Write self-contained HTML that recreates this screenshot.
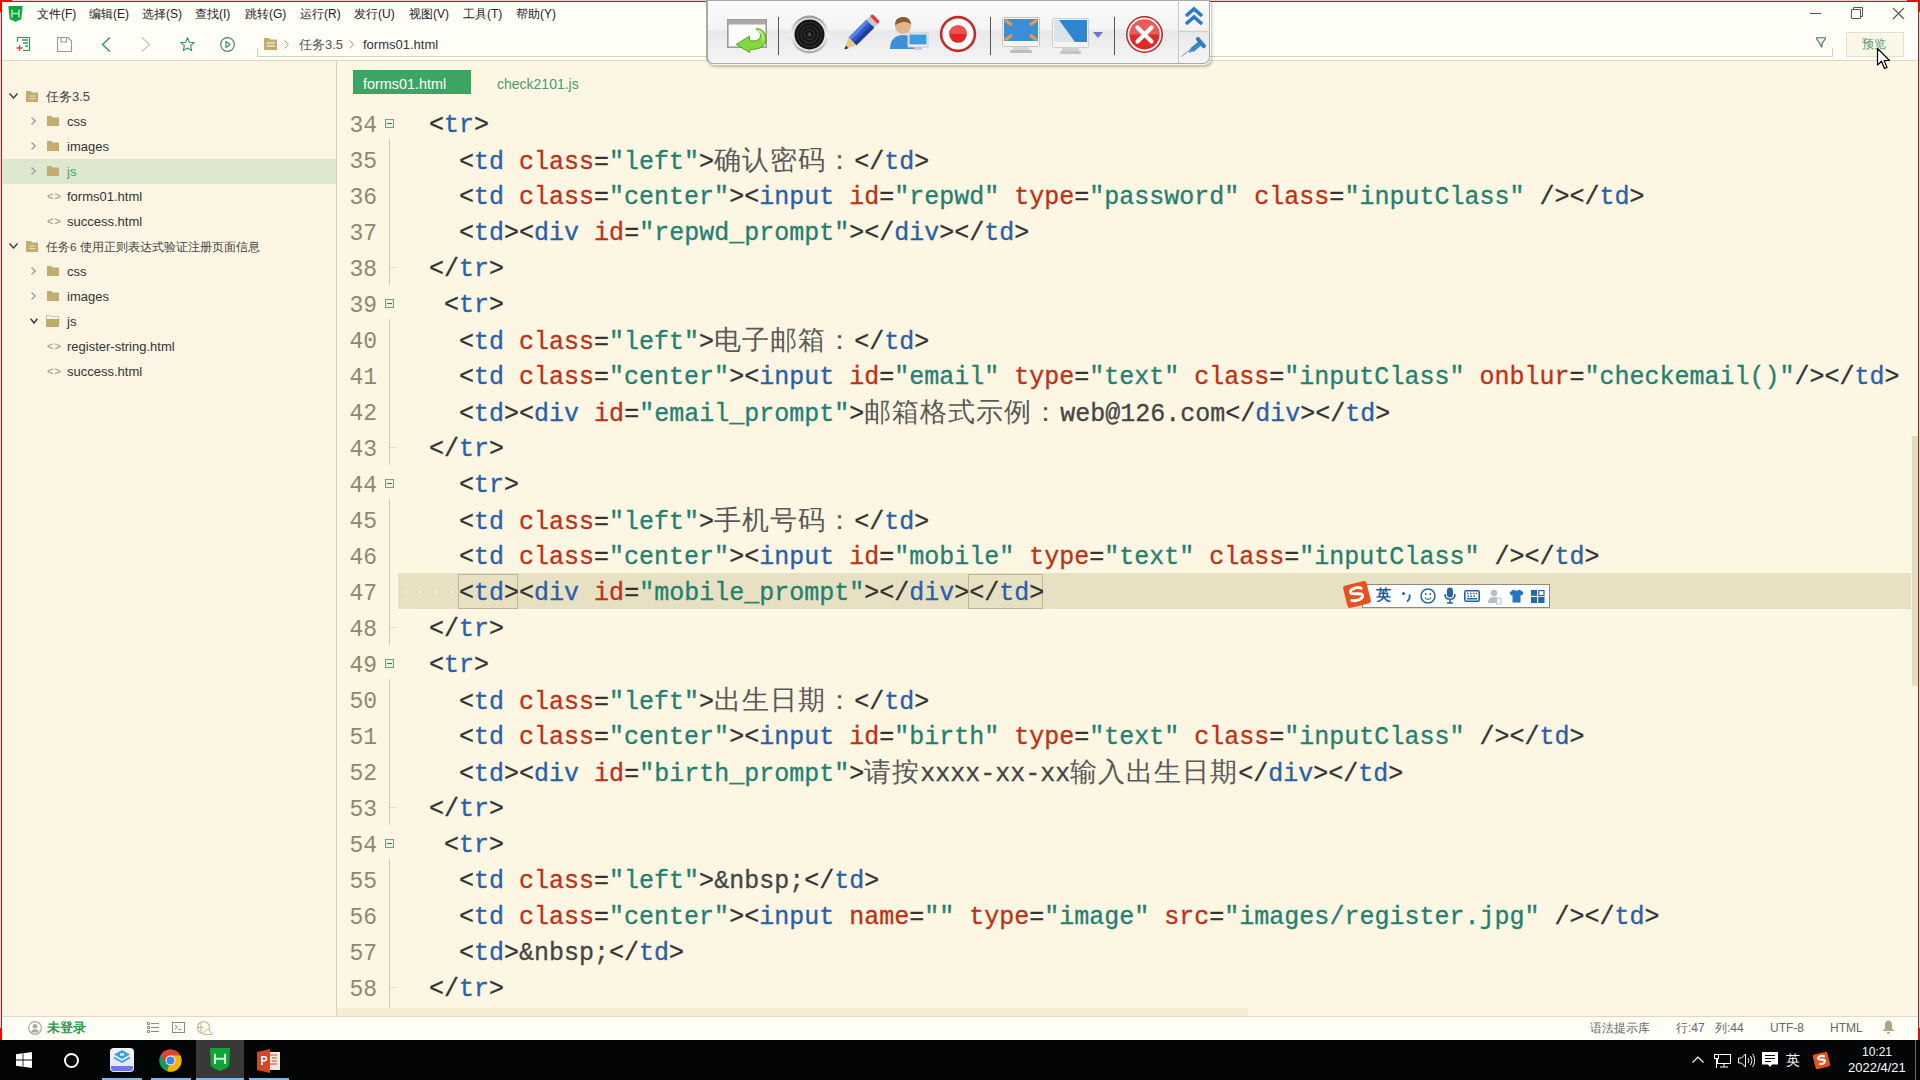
<!DOCTYPE html>
<html><head><meta charset="utf-8">
<style>
*{box-sizing:border-box;margin:0;padding:0}
html,body{width:1920px;height:1080px;overflow:hidden}
body{position:relative;background:#FDF6E3;font-family:"Liberation Sans",sans-serif;color:#333}
.abs{position:absolute}
svg{position:absolute;overflow:visible}
#topbar{left:0;top:0;width:1920px;height:61px;background:#FEFDF6;border-bottom:1px solid #DCD6C2}
.mi{position:absolute;top:6px;font-size:12px;line-height:17px;color:#222;white-space:nowrap}
#sidebar{left:0;top:61px;width:337px;height:955px;background:#FCF5E3;border-right:1px solid #D8D2BE}
.tr{position:absolute;font-size:13px;line-height:17px;color:#333;white-space:nowrap}
#editor{left:337px;top:61px;width:1581px;height:955px;background:#FDF6E3}
.ln{position:absolute;left:337px;width:40px;text-align:right;font-family:"Liberation Mono",monospace;font-size:23px;color:#8E8870;line-height:36px;height:36px}
.cj{display:inline-block;font-size:27px;letter-spacing:1px;color:#5A5A5A;overflow:visible;-webkit-text-stroke:0}
.cl{position:absolute;left:399px;font-family:"Liberation Mono",monospace;font-size:25px;line-height:36px;height:36px;white-space:pre;color:#333;-webkit-text-stroke:0.3px currentColor}
.t{color:#2A60A8}.a{color:#BF3015}.v{color:#23806F}.p{color:#333}.x{color:#444}
#status{left:0;top:1016px;width:1920px;height:24px;background:#FEFDF6;border-top:1px solid #DED8C4}
.st{position:absolute;top:5px;font-size:12px;line-height:14px;color:#666;white-space:nowrap}
#taskbar{left:0;top:1040px;width:1920px;height:40px;background:#040506}
</style></head><body>
<div id="topbar" class="abs"></div>
<div id="sidebar" class="abs"></div>
<div id="editor" class="abs"></div>
<div class="abs" style="left:398px;top:573px;width:1513px;height:36px;background:#E7E0C3"></div>
<div class="abs" style="left:458px;top:574px;width:60px;height:35px;border:1px solid #BDB59C"></div>
<div class="abs" style="left:968px;top:574px;width:75px;height:35px;border:1px solid #BDB59C"></div>
<div class="abs" style="left:405px;top:591px;width:2px;height:2px;background:#F7F2E2"></div>
<div class="abs" style="left:420px;top:591px;width:2px;height:2px;background:#F7F2E2"></div>
<div class="abs" style="left:435px;top:591px;width:2px;height:2px;background:#F7F2E2"></div>
<div class="abs" style="left:450px;top:591px;width:2px;height:2px;background:#F7F2E2"></div>
<div class="abs" style="left:385px;top:119px;width:9px;height:9px;border:1px solid #7E9A82;background:#E8F4E0"></div>
<div class="abs" style="left:387px;top:123px;width:5px;height:1px;background:#4F6F55"></div>
<div class="abs" style="left:389px;top:139px;width:1px;height:146px;background:#CFC8B2"></div>
<div class="abs" style="left:390px;top:267px;width:6px;height:1px;background:#E2DBC6"></div>
<div class="abs" style="left:385px;top:299px;width:9px;height:9px;border:1px solid #7E9A82;background:#E8F4E0"></div>
<div class="abs" style="left:387px;top:303px;width:5px;height:1px;background:#4F6F55"></div>
<div class="abs" style="left:389px;top:319px;width:1px;height:146px;background:#CFC8B2"></div>
<div class="abs" style="left:390px;top:447px;width:6px;height:1px;background:#E2DBC6"></div>
<div class="abs" style="left:385px;top:479px;width:9px;height:9px;border:1px solid #7E9A82;background:#E8F4E0"></div>
<div class="abs" style="left:387px;top:483px;width:5px;height:1px;background:#4F6F55"></div>
<div class="abs" style="left:389px;top:499px;width:1px;height:146px;background:#CFC8B2"></div>
<div class="abs" style="left:390px;top:627px;width:6px;height:1px;background:#E2DBC6"></div>
<div class="abs" style="left:385px;top:659px;width:9px;height:9px;border:1px solid #7E9A82;background:#E8F4E0"></div>
<div class="abs" style="left:387px;top:663px;width:5px;height:1px;background:#4F6F55"></div>
<div class="abs" style="left:389px;top:679px;width:1px;height:146px;background:#CFC8B2"></div>
<div class="abs" style="left:390px;top:807px;width:6px;height:1px;background:#E2DBC6"></div>
<div class="abs" style="left:385px;top:839px;width:9px;height:9px;border:1px solid #7E9A82;background:#E8F4E0"></div>
<div class="abs" style="left:387px;top:843px;width:5px;height:1px;background:#4F6F55"></div>
<div class="abs" style="left:389px;top:859px;width:1px;height:149px;background:#CFC8B2"></div>
<div class="abs" style="left:390px;top:987px;width:6px;height:1px;background:#E2DBC6"></div>
<div class="abs" style="left:1912px;top:436px;width:6px;height:250px;background:#E4DDC0"></div>
<div class="abs" style="left:337px;top:1008px;width:911px;height:8px;background:#F2EDD3"></div>
<div id="code"><div class="ln" style="top:108px">34</div>
<div class="cl" style="top:108px"><span class="x">  </span><span class="p">&lt;</span><span class="t">tr</span><span class="p">&gt;</span></div>
<div class="ln" style="top:144px">35</div>
<div class="cl" style="top:144px"><span class="x">    </span><span class="p">&lt;</span><span class="t">td</span> <span class="a">class</span><span class="p">=</span><span class="v">"left"</span><span class="p">&gt;</span><span class="cj" style="width:140px">确认密码：</span><span class="p">&lt;/</span><span class="t">td</span><span class="p">&gt;</span></div>
<div class="ln" style="top:180px">36</div>
<div class="cl" style="top:180px"><span class="x">    </span><span class="p">&lt;</span><span class="t">td</span> <span class="a">class</span><span class="p">=</span><span class="v">"center"</span><span class="p">&gt;</span><span class="p">&lt;</span><span class="t">input</span> <span class="a">id</span><span class="p">=</span><span class="v">"repwd"</span> <span class="a">type</span><span class="p">=</span><span class="v">"password"</span> <span class="a">class</span><span class="p">=</span><span class="v">"inputClass"</span> <span class="p">/&gt;</span><span class="p">&lt;/</span><span class="t">td</span><span class="p">&gt;</span></div>
<div class="ln" style="top:216px">37</div>
<div class="cl" style="top:216px"><span class="x">    </span><span class="p">&lt;</span><span class="t">td</span><span class="p">&gt;</span><span class="p">&lt;</span><span class="t">div</span> <span class="a">id</span><span class="p">=</span><span class="v">"repwd_prompt"</span><span class="p">&gt;</span><span class="p">&lt;/</span><span class="t">div</span><span class="p">&gt;</span><span class="p">&lt;/</span><span class="t">td</span><span class="p">&gt;</span></div>
<div class="ln" style="top:252px">38</div>
<div class="cl" style="top:252px"><span class="x">  </span><span class="p">&lt;/</span><span class="t">tr</span><span class="p">&gt;</span></div>
<div class="ln" style="top:288px">39</div>
<div class="cl" style="top:288px"><span class="x">   </span><span class="p">&lt;</span><span class="t">tr</span><span class="p">&gt;</span></div>
<div class="ln" style="top:324px">40</div>
<div class="cl" style="top:324px"><span class="x">    </span><span class="p">&lt;</span><span class="t">td</span> <span class="a">class</span><span class="p">=</span><span class="v">"left"</span><span class="p">&gt;</span><span class="cj" style="width:140px">电子邮箱：</span><span class="p">&lt;/</span><span class="t">td</span><span class="p">&gt;</span></div>
<div class="ln" style="top:360px">41</div>
<div class="cl" style="top:360px"><span class="x">    </span><span class="p">&lt;</span><span class="t">td</span> <span class="a">class</span><span class="p">=</span><span class="v">"center"</span><span class="p">&gt;</span><span class="p">&lt;</span><span class="t">input</span> <span class="a">id</span><span class="p">=</span><span class="v">"email"</span> <span class="a">type</span><span class="p">=</span><span class="v">"text"</span> <span class="a">class</span><span class="p">=</span><span class="v">"inputClass"</span> <span class="a">onblur</span><span class="p">=</span><span class="v">"checkemail()"</span><span class="p">/&gt;</span><span class="p">&lt;/</span><span class="t">td</span><span class="p">&gt;</span></div>
<div class="ln" style="top:396px">42</div>
<div class="cl" style="top:396px"><span class="x">    </span><span class="p">&lt;</span><span class="t">td</span><span class="p">&gt;</span><span class="p">&lt;</span><span class="t">div</span> <span class="a">id</span><span class="p">=</span><span class="v">"email_prompt"</span><span class="p">&gt;</span><span class="cj" style="width:196px">邮箱格式示例：</span><span class="x">web@126.com</span><span class="p">&lt;/</span><span class="t">div</span><span class="p">&gt;</span><span class="p">&lt;/</span><span class="t">td</span><span class="p">&gt;</span></div>
<div class="ln" style="top:432px">43</div>
<div class="cl" style="top:432px"><span class="x">  </span><span class="p">&lt;/</span><span class="t">tr</span><span class="p">&gt;</span></div>
<div class="ln" style="top:468px">44</div>
<div class="cl" style="top:468px"><span class="x">    </span><span class="p">&lt;</span><span class="t">tr</span><span class="p">&gt;</span></div>
<div class="ln" style="top:504px">45</div>
<div class="cl" style="top:504px"><span class="x">    </span><span class="p">&lt;</span><span class="t">td</span> <span class="a">class</span><span class="p">=</span><span class="v">"left"</span><span class="p">&gt;</span><span class="cj" style="width:140px">手机号码：</span><span class="p">&lt;/</span><span class="t">td</span><span class="p">&gt;</span></div>
<div class="ln" style="top:540px">46</div>
<div class="cl" style="top:540px"><span class="x">    </span><span class="p">&lt;</span><span class="t">td</span> <span class="a">class</span><span class="p">=</span><span class="v">"center"</span><span class="p">&gt;</span><span class="p">&lt;</span><span class="t">input</span> <span class="a">id</span><span class="p">=</span><span class="v">"mobile"</span> <span class="a">type</span><span class="p">=</span><span class="v">"text"</span> <span class="a">class</span><span class="p">=</span><span class="v">"inputClass"</span> <span class="p">/&gt;</span><span class="p">&lt;/</span><span class="t">td</span><span class="p">&gt;</span></div>
<div class="ln" style="top:576px">47</div>
<div class="cl" style="top:576px"><span class="x">    </span><span class="p">&lt;</span><span class="t">td</span><span class="p">&gt;</span><span class="p">&lt;</span><span class="t">div</span> <span class="a">id</span><span class="p">=</span><span class="v">"mobile_prompt"</span><span class="p">&gt;</span><span class="p">&lt;/</span><span class="t">div</span><span class="p">&gt;</span><span class="p">&lt;/</span><span class="t">td</span><span class="p">&gt;</span></div>
<div class="ln" style="top:612px">48</div>
<div class="cl" style="top:612px"><span class="x">  </span><span class="p">&lt;/</span><span class="t">tr</span><span class="p">&gt;</span></div>
<div class="ln" style="top:648px">49</div>
<div class="cl" style="top:648px"><span class="x">  </span><span class="p">&lt;</span><span class="t">tr</span><span class="p">&gt;</span></div>
<div class="ln" style="top:684px">50</div>
<div class="cl" style="top:684px"><span class="x">    </span><span class="p">&lt;</span><span class="t">td</span> <span class="a">class</span><span class="p">=</span><span class="v">"left"</span><span class="p">&gt;</span><span class="cj" style="width:140px">出生日期：</span><span class="p">&lt;/</span><span class="t">td</span><span class="p">&gt;</span></div>
<div class="ln" style="top:720px">51</div>
<div class="cl" style="top:720px"><span class="x">    </span><span class="p">&lt;</span><span class="t">td</span> <span class="a">class</span><span class="p">=</span><span class="v">"center"</span><span class="p">&gt;</span><span class="p">&lt;</span><span class="t">input</span> <span class="a">id</span><span class="p">=</span><span class="v">"birth"</span> <span class="a">type</span><span class="p">=</span><span class="v">"text"</span> <span class="a">class</span><span class="p">=</span><span class="v">"inputClass"</span> <span class="p">/&gt;</span><span class="p">&lt;/</span><span class="t">td</span><span class="p">&gt;</span></div>
<div class="ln" style="top:756px">52</div>
<div class="cl" style="top:756px"><span class="x">    </span><span class="p">&lt;</span><span class="t">td</span><span class="p">&gt;</span><span class="p">&lt;</span><span class="t">div</span> <span class="a">id</span><span class="p">=</span><span class="v">"birth_prompt"</span><span class="p">&gt;</span><span class="cj" style="width:56px">请按</span><span class="x">xxxx-xx-xx</span><span class="cj" style="width:168px">输入出生日期</span><span class="p">&lt;/</span><span class="t">div</span><span class="p">&gt;</span><span class="p">&lt;/</span><span class="t">td</span><span class="p">&gt;</span></div>
<div class="ln" style="top:792px">53</div>
<div class="cl" style="top:792px"><span class="x">  </span><span class="p">&lt;/</span><span class="t">tr</span><span class="p">&gt;</span></div>
<div class="ln" style="top:828px">54</div>
<div class="cl" style="top:828px"><span class="x">   </span><span class="p">&lt;</span><span class="t">tr</span><span class="p">&gt;</span></div>
<div class="ln" style="top:864px">55</div>
<div class="cl" style="top:864px"><span class="x">    </span><span class="p">&lt;</span><span class="t">td</span> <span class="a">class</span><span class="p">=</span><span class="v">"left"</span><span class="p">&gt;</span><span class="x">&amp;nbsp;</span><span class="p">&lt;/</span><span class="t">td</span><span class="p">&gt;</span></div>
<div class="ln" style="top:900px">56</div>
<div class="cl" style="top:900px"><span class="x">    </span><span class="p">&lt;</span><span class="t">td</span> <span class="a">class</span><span class="p">=</span><span class="v">"center"</span><span class="p">&gt;</span><span class="p">&lt;</span><span class="t">input</span> <span class="a">name</span><span class="p">=</span><span class="v">""</span> <span class="a">type</span><span class="p">=</span><span class="v">"image"</span> <span class="a">src</span><span class="p">=</span><span class="v">"images/register.jpg"</span> <span class="p">/&gt;</span><span class="p">&lt;/</span><span class="t">td</span><span class="p">&gt;</span></div>
<div class="ln" style="top:936px">57</div>
<div class="cl" style="top:936px"><span class="x">    </span><span class="p">&lt;</span><span class="t">td</span><span class="p">&gt;</span><span class="x">&amp;nbsp;</span><span class="p">&lt;/</span><span class="t">td</span><span class="p">&gt;</span></div>
<div class="ln" style="top:972px">58</div>
<div class="cl" style="top:972px"><span class="x">  </span><span class="p">&lt;/</span><span class="t">tr</span><span class="p">&gt;</span></div></div>
<!-- IME toolbar -->
<div class="abs" style="left:1362px;top:584px;width:188px;height:24px;background:#FDFEFF;border:1px solid #8F8A7A"></div>
<svg style="left:1342px;top:580px" width="30" height="29" viewBox="0 0 30 29"><g transform="rotate(-14 15 14.5)"><rect x="3" y="3" width="24" height="23" rx="3" fill="#E8501E"/><path d="M20.5 9.5C19 8 16 7.5 13 8C9.5 8.5 8.5 10.5 9.8 12C11 13.3 14 13.5 16.5 14C19.5 14.7 21 16 19.8 18C18.5 19.8 15 20.5 11.5 20C10 19.8 9 19.3 8.5 19" stroke="#fff" stroke-width="3" fill="none" stroke-linecap="round"/></g></svg>
<span class="abs" style="left:1376px;top:586px;font-size:15px;line-height:18px;font-weight:bold;color:#1E5E9E">英</span>
<div class="abs" style="left:1402px;top:592px;width:3px;height:3px;border-radius:50%;background:#2A5F8F"></div>
<svg style="left:1406px;top:594px" width="5" height="8" viewBox="0 0 5 8"><path d="M3.5 0.5C4 3 3 6 1 7.5" stroke="#2A5F8F" stroke-width="1.8" fill="none"/></svg>
<svg style="left:1420px;top:588px" width="16" height="16" viewBox="0 0 16 16"><circle cx="8" cy="8" r="7" stroke="#2466A8" stroke-width="1.5" fill="none"/><path d="M5.8 5V7M10.2 5V7" stroke="#2466A8" stroke-width="1.4"/><path d="M4.8 9.5C6.5 12 9.5 12 11.2 9.5" stroke="#2466A8" stroke-width="1.3" fill="none"/></svg>
<svg style="left:1444px;top:587px" width="12" height="17" viewBox="0 0 12 17"><rect x="3" y="0.5" width="6" height="10" rx="3" fill="#2466A8"/><path d="M1 7C1 10.5 3 12.3 6 12.3C9 12.3 11 10.5 11 7M6 12.3V15.5M3 16H9" stroke="#2466A8" stroke-width="1.6" fill="none"/></svg>
<svg style="left:1464px;top:590px" width="16" height="12" viewBox="0 0 16 12"><rect x="0.8" y="0.8" width="14.4" height="10.4" rx="1.5" fill="#fff" stroke="#1F62B0" stroke-width="1.6"/><path d="M3 3.5H4.5M6 3.5H7.5M9 3.5H10.5M12 3.5H13M3.5 6.2H5M6.5 6.2H8M9.5 6.2H11M3 8.8H13" stroke="#1F62B0" stroke-width="1.4"/></svg>
<svg style="left:1488px;top:589px" width="14" height="16" viewBox="0 0 14 16"><circle cx="6" cy="4" r="3.3" fill="#B7BCC2"/><path d="M0 14C0 10 2.5 8 6 8C9.5 8 12 10 12 14Z" fill="#B7BCC2"/><rect x="8.5" y="9" width="4.5" height="6" fill="#fff" stroke="#B7BCC2" stroke-width="1"/></svg>
<svg style="left:1509px;top:589px" width="15" height="14" viewBox="0 0 15 14"><path d="M4.5 0.5L0.5 3.5L2 6.5L3.5 6V13.5H11.5V6L13 6.5L14.5 3.5L10.5 0.5C9.5 2 5.5 2 4.5 0.5Z" fill="#2474C0"/></svg>
<svg style="left:1531px;top:590px" width="14" height="13" viewBox="0 0 14 13"><rect x="0" y="0" width="6" height="5.8" fill="#1F6AAE"/><rect x="7.8" y="0.6" width="5.2" height="5" fill="#fff" stroke="#1F6AAE" stroke-width="1.2"/><rect x="0" y="7" width="6" height="6" fill="#1F6AAE"/><rect x="7.2" y="7" width="6.3" height="6" fill="#1F6AAE"/></svg>

<div id="status" class="abs"></div>
<svg style="left:28px;top:1021px" width="14" height="14" viewBox="0 0 14 14"><circle cx="7" cy="7" r="6.4" stroke="#A9A9A6" stroke-width="1.2" fill="none"/><circle cx="7" cy="5.3" r="2.3" fill="#A9A9A6"/><path d="M3 11.5C3.5 9 5 8.2 7 8.2C9 8.2 10.5 9 11 11.5Z" fill="#A9A9A6"/></svg>
<span class="st" style="left:47px;top:1020px;font-size:13px;line-height:16px;font-weight:bold;color:#2E9A4E">未登录</span>
<svg style="left:147px;top:1022px" width="12" height="11" viewBox="0 0 12 11"><path d="M0.5 0.5H2.5V2.5H0.5ZM0.5 4.5H2.5V6.5H0.5ZM0.5 8.5H2.5V10.5H0.5Z" stroke="#8A8A80" fill="none" stroke-width="1"/><path d="M4 1.5H12M4 5.5H12M4 9.5H12" stroke="#8A8A80" stroke-width="1"/></svg>
<svg style="left:172px;top:1022px" width="13" height="11" viewBox="0 0 13 11"><rect x="0.5" y="0.5" width="12" height="10" stroke="#8A8A80" fill="none" stroke-width="1"/><path d="M3 3L5.5 5L3 7M6.5 7.5H9" stroke="#8A8A80" fill="none" stroke-width="1"/></svg>
<svg style="left:197px;top:1021px" width="16" height="14" viewBox="0 0 16 14"><circle cx="6.5" cy="6.5" r="6" stroke="#C6B789" stroke-width="1.1" fill="none"/><path d="M0.5 6.5H7M4 1V12" stroke="#C6B789" stroke-width="1"/><path d="M8 13.5C6.5 13.5 6 12.5 6.5 11.3C7 10.2 8 10 8.6 10.2C9 8.5 10.5 8 11.8 8.5C13 9 13.3 10.3 13 11C14.5 11.2 15.5 12 15.3 13.5Z" fill="#FEFDF6" stroke="#C6B789" stroke-width="1"/></svg>
<span class="st" style="left:1590px;top:1021px">语法提示库</span>
<span class="st" style="left:1676px;top:1021px">行:47</span>
<span class="st" style="left:1715px;top:1021px">列:44</span>
<span class="st" style="left:1770px;top:1021px">UTF-8</span>
<span class="st" style="left:1830px;top:1021px">HTML</span>
<svg style="left:1882px;top:1020px" width="13" height="14" viewBox="0 0 13 14"><path d="M6.5 0.5C4 0.5 3 2.5 3 5V8.5L0.5 11H12.5L10 8.5V5C10 2.5 9 0.5 6.5 0.5Z" fill="#A9A98A"/><rect x="5" y="12" width="3" height="1.6" fill="#A9A98A"/></svg>

<div id="taskbar" class="abs"></div>
<!-- start -->
<svg style="left:16px;top:1052px" width="16" height="16" viewBox="0 0 16 16"><path d="M0 2.2L6.6 1.3V7.6H0ZM7.4 1.2L16 0V7.6H7.4ZM0 8.4H6.6V14.7L0 13.8ZM7.4 8.4H16V16L7.4 14.8Z" fill="#fff"/></svg>
<!-- search -->
<div class="abs" style="left:64px;top:1053px;width:15px;height:15px;border:2px solid #fff;border-radius:50%"></div>
<!-- app1 -->
<div class="abs" style="left:110px;top:1048px;width:24px;height:24px;border-radius:4px;background:linear-gradient(#F2F4F8,#E2E6F0)"></div>
<svg style="left:113px;top:1050px" width="18" height="14" viewBox="0 0 18 14"><path d="M9 0L17 4.5L9 9L1 4.5Z" fill="#3AA0E0"/><path d="M1 7.5L9 12L17 7.5" stroke="#3AA0E0" stroke-width="1.8" fill="none"/><path d="M7 3.5H11V5.5H7Z" fill="#fff"/></svg>
<div class="abs" style="left:111px;top:1066px;width:22px;height:5px;background:#6F78E8;border-radius:0 0 3px 3px"></div>
<!-- chrome -->
<svg style="left:159px;top:1049px" width="23" height="23" viewBox="0 0 24 24"><circle cx="12" cy="12" r="11.5" fill="#DB4437"/><path d="M12 12L2 6.2A11.5 11.5 0 0 0 8.5 23Z" fill="#0F9D58"/><path d="M12 12L8.5 23.3A11.5 11.5 0 0 0 23.5 12V11.5L22 6.5Z" fill="#F4B400"/><path d="M12 12H23.3A11.5 11.5 0 0 0 22 6.5H12Z" fill="#F4B400"/><path d="M12 6.5H22A11.5 11.5 0 0 0 2 6.2L7.2 15Z" fill="#DB4437"/><circle cx="12" cy="12" r="5.2" fill="#fff"/><circle cx="12" cy="12" r="4.2" fill="#4285F4"/></svg>
<!-- hbuilder active -->
<div class="abs" style="left:196px;top:1040px;width:48px;height:40px;background:#383838"></div>
<svg style="left:210px;top:1048px" width="20" height="23" viewBox="0 0 20 23"><path d="M0 0H20L19.2 16.5Q18.8 19 16 20.3L10 23L4 20.3Q1.2 19 0.8 16.5Z" fill="#14A538"/><path d="M5 5.7V16M15 5.7V16M5 10.8H15" stroke="#D8FADF" stroke-width="1.9" fill="none"/></svg>
<!-- ppt -->
<svg style="left:257px;top:1049px" width="24" height="24" viewBox="0 0 24 24"><rect x="9" y="3" width="14" height="18" fill="#F3E6E0"/><path d="M13 6H20M15 9H20M15 12H20M13 15H20" stroke="#D04A2A" stroke-width="1.2"/><path d="M0 3L13 0V24L0 21Z" fill="#D24726"/><path d="M4 16V7H7.5C9.5 7 10.3 8.2 10.3 9.7C10.3 11.3 9.3 12.4 7.5 12.4H5.8V16Z" fill="#fff"/><path d="M5.8 8.6V10.9H7.3C8.1 10.9 8.5 10.4 8.5 9.7C8.5 9 8.1 8.6 7.3 8.6Z" fill="#D24726"/></svg>
<!-- underlines -->
<div class="abs" style="left:102px;top:1078px;width:40px;height:2px;background:#86B6E6"></div>
<div class="abs" style="left:151px;top:1078px;width:40px;height:2px;background:#86B6E6"></div>
<div class="abs" style="left:196px;top:1078px;width:48px;height:2px;background:#86B6E6"></div>
<div class="abs" style="left:249px;top:1078px;width:40px;height:2px;background:#86B6E6"></div>
<!-- tray -->
<svg style="left:1692px;top:1056px" width="12" height="7" viewBox="0 0 12 7"><path d="M0.5 6.5L6 1L11.5 6.5" stroke="#fff" stroke-width="1.2" fill="none"/></svg>
<svg style="left:1714px;top:1054px" width="17" height="14" viewBox="0 0 17 14"><rect x="3.5" y="0.5" width="13" height="9" stroke="#fff" fill="none" stroke-width="1"/><rect x="0.5" y="0.5" width="4" height="4" stroke="#fff" fill="#000" stroke-width="1"/><path d="M2.5 4.5V14M10 9.5V12.5M6 13H14" stroke="#fff" stroke-width="1"/></svg>
<svg style="left:1738px;top:1053px" width="17" height="15" viewBox="0 0 17 15"><path d="M0.5 5H3.5L7.5 1V14L3.5 10H0.5Z" stroke="#fff" fill="none" stroke-width="1"/><path d="M10 5C11 6.5 11 8.5 10 10M12.3 3C14.3 5.5 14.3 9.5 12.3 12M14.5 1C17.3 4.5 17.3 10.5 14.5 14" stroke="#fff" fill="none" stroke-width="1"/></svg>
<svg style="left:1762px;top:1052px" width="16" height="16" viewBox="0 0 16 16"><path d="M0 0H16V12.5H10L8 15L6 12.5H0Z" fill="#fff"/><path d="M3 3.5H13M3 6.5H13M3 9.5H9" stroke="#000" stroke-width="1.2"/></svg>
<span class="abs" style="left:1786px;top:1052px;font-size:14px;line-height:16px;color:#fff">英</span>
<svg style="left:1812px;top:1051px" width="19" height="19" viewBox="0 0 19 19"><g transform="rotate(-14 9.5 9.5)"><rect x="2" y="2" width="15" height="15" rx="2" fill="#E8501E"/><path d="M13 6C12 5 10.5 4.8 9 5C7 5.3 6.3 6.5 7 7.5C7.8 8.5 9.5 8.5 11 9C12.5 9.5 13 10.5 12.3 11.5C11.5 12.7 9 13 7 12.5" stroke="#fff" stroke-width="2.2" fill="none" stroke-linecap="round"/></g></svg>
<span class="abs" style="left:1862px;top:1045px;font-size:12px;line-height:14px;color:#fff">10:21</span>
<span class="abs" style="left:1848px;top:1061px;font-size:13px;line-height:14px;color:#fff">2022/4/21</span>
<div class="abs" style="left:1915px;top:1040px;width:1px;height:40px;background:#6A6A6A"></div>

<!-- window red frame -->
<div class="abs" style="left:0;top:0;width:1920px;height:1px;background:#F6C9C9"></div>
<div class="abs" style="left:0;top:1px;width:1919px;height:1px;background:#7E3434"></div>
<div class="abs" style="left:0;top:0;width:1px;height:1040px;background:#F6C9C9"></div>
<div class="abs" style="left:1px;top:0;width:1px;height:1040px;background:#7E3434"></div>
<div class="abs" style="left:1919px;top:0;width:1px;height:1040px;background:#F6C9C9"></div>
<div class="abs" style="left:1918px;top:0;width:1px;height:1040px;background:#7E3434"></div>
<div class="abs" style="left:0;top:0;width:12px;height:2px;background:#F00"></div>
<div class="abs" style="left:0;top:0;width:2px;height:12px;background:#F00"></div>
<div class="abs" style="left:0;top:1028px;width:2px;height:12px;background:#F00"></div>
<div class="abs" style="left:1907px;top:0;width:13px;height:2px;background:#F00"></div>
<div class="abs" style="left:1918px;top:0;width:2px;height:12px;background:#F00"></div>
<div class="abs" style="left:1918px;top:1028px;width:2px;height:12px;background:#F00"></div>
<!-- logo -->
<svg style="left:8px;top:6px" width="15" height="16" viewBox="0 0 15 16"><path d="M0.3 0H14.7L13.2 13.3L7.5 15.8L1.8 13.3Z" fill="#17A040"/><path d="M4 3.5V11.5M11 3.5V11.5M4 7.5H11" stroke="#9CF5B0" stroke-width="1.5" fill="none"/></svg>
<!-- menu -->
<span class="mi" style="left:37px">文件(F)</span>
<span class="mi" style="left:89px">编辑(E)</span>
<span class="mi" style="left:142px">选择(S)</span>
<span class="mi" style="left:195px">查找(I)</span>
<span class="mi" style="left:245px">跳转(G)</span>
<span class="mi" style="left:300px">运行(R)</span>
<span class="mi" style="left:354px">发行(U)</span>
<span class="mi" style="left:409px">视图(V)</span>
<span class="mi" style="left:463px">工具(T)</span>
<span class="mi" style="left:516px">帮助(Y)</span>
<!-- window controls -->
<div class="abs" style="left:1810px;top:13px;width:11px;height:1px;background:#555"></div>
<svg style="left:1851px;top:7px" width="12" height="12" viewBox="0 0 12 12"><path d="M0.5 2.5H9.5V11.5H0.5Z M2.5 2.5V0.5H11.5V9.5H9.5" stroke="#555" fill="none" stroke-width="1"/></svg>
<svg style="left:1893px;top:8px" width="11" height="11" viewBox="0 0 11 11"><path d="M0 0L11 11M11 0L0 11" stroke="#555" stroke-width="1.1"/></svg>
<!-- toolbar icons -->
<svg style="left:16px;top:37px" width="15" height="15" viewBox="0 0 15 15"><path d="M1.5 5V0.5H13.5V13.5H7" stroke="#3B8E64" fill="none" stroke-width="1.2"/><path d="M6 3H12M7 6H12M9 9H12" stroke="#3B8E64" stroke-width="1.3"/><path d="M0.5 11H6.5M3.5 8V14" stroke="#D24A3E" stroke-width="1.3"/></svg>
<svg style="left:57px;top:37px" width="15" height="15" viewBox="0 0 15 15"><path d="M0.5 0.5H11L14.5 4V14.5H0.5Z M4 0.5V5H9.5V0.5" stroke="#9A9A94" fill="none" stroke-width="1.1"/></svg>
<svg style="left:101px;top:37px" width="10" height="15" viewBox="0 0 10 15"><path d="M9 0.5L1.5 7.5L9 14.5" stroke="#3B8E64" fill="none" stroke-width="1.4"/></svg>
<svg style="left:141px;top:37px" width="10" height="15" viewBox="0 0 10 15"><path d="M1 0.5L8.5 7.5L1 14.5" stroke="#C8C6BC" fill="none" stroke-width="1.3"/></svg>
<svg style="left:180px;top:37px" width="15" height="15" viewBox="0 0 15 15"><path d="M7.5 0.8L9.4 5.2L14.2 5.6L10.6 8.7L11.7 13.6L7.5 11L3.3 13.6L4.4 8.7L0.8 5.6L5.6 5.2Z" stroke="#3B8E64" fill="none" stroke-width="1.1" stroke-linejoin="round"/></svg>
<svg style="left:220px;top:37px" width="15" height="15" viewBox="0 0 15 15"><circle cx="7.5" cy="7.5" r="6.8" stroke="#3B8E64" fill="none" stroke-width="1.2"/><path d="M6 4.5V10.5L10 7.5Z" stroke="#3B8E64" fill="none" stroke-width="1.1" stroke-linejoin="round"/></svg>
<!-- breadcrumb box -->
<div class="abs" style="left:257px;top:56px;width:1576px;height:1px;background:#D3CFBE"></div>
<div class="abs" style="left:257px;top:48px;width:1px;height:9px;background:#D3CFBE"></div>
<div class="abs" style="left:1832px;top:48px;width:1px;height:9px;background:#D3CFBE"></div>
<svg style="left:264px;top:38px" width="14" height="12" viewBox="0 0 14 12"><path d="M0 0H5L6.5 1.5H13V12H0Z" fill="#C4AD6A"/><path d="M3 5H11M3 8H11" stroke="#FEFEF9" stroke-width="1.2"/></svg>
<svg style="left:284px;top:40px" width="5" height="9" viewBox="0 0 5 9"><path d="M0.5 0.5L4.5 4.5L0.5 8.5" stroke="#999" fill="none"/></svg>
<span class="mi" style="left:299px;top:36px;color:#555;font-size:13px">任务3.5</span>
<svg style="left:349px;top:40px" width="5" height="9" viewBox="0 0 5 9"><path d="M0.5 0.5L4.5 4.5L0.5 8.5" stroke="#999" fill="none"/></svg>
<span class="mi" style="left:363px;top:36px;color:#333;font-size:13px">forms01.html</span>
<svg style="left:1816px;top:37px" width="10" height="11" viewBox="0 0 10 11"><path d="M0.6 0.8H9.4V2L6.3 5.8L5.8 10.3L3.2 5.6L0.6 2Z" stroke="#5E6E62" fill="#E4F2EC" stroke-width="1.1" stroke-linejoin="round"/></svg>
<!-- preview button -->
<div class="abs" style="left:1846px;top:32px;width:58px;height:25px;background:#FAF7E8;border:1px solid #E4E0CE"></div>
<span class="mi" style="left:1862px;top:36px;font-size:12px;color:#4E9A6A">预览</span>
<!-- cursor -->
<svg style="left:1877px;top:48px" width="14" height="22" viewBox="0 0 14 22"><path d="M0.5 0.5V17L4.5 13.2L7.5 20.5L10 19.5L7.2 12.5H12.5Z" fill="#fff" stroke="#000" stroke-width="1.2" stroke-linejoin="round"/></svg>
<!-- tabs -->
<div class="abs" style="left:353px;top:70px;width:118px;height:24px;background:#3DA564"></div>
<span class="mi" style="left:363px;top:76px;color:#fff;font-size:14.4px">forms01.html</span>
<span class="mi" style="left:497px;top:76px;color:#4A9A70;font-size:14px">check2101.js</span>

<div class="abs" style="left:2px;top:159px;width:334px;height:25px;background:#DDE8CF"></div>
<!-- root 1 -->
<svg style="left:9px;top:93px" width="9" height="6" viewBox="0 0 9 6"><path d="M0.5 0.5L4.5 5L8.5 0.5" stroke="#333" fill="none" stroke-width="1.3"/></svg>
<svg style="left:26px;top:91px" width="13" height="11" viewBox="0 0 13 11"><path d="M0 0H5L6 1.5H12V11H0Z" fill="#C2AC6E"/><path d="M3.5 5H9.5M3.5 7.5H9.5" stroke="#EFE3B8" stroke-width="1.1"/></svg>
<span class="tr" style="left:46px;top:88px;color:#444">任务3.5</span>
<!-- css -->
<svg style="left:31px;top:117px" width="5" height="8" viewBox="0 0 5 8"><path d="M0.5 0.5L4.3 4L0.5 7.5" stroke="#999" fill="none" stroke-width="1.2"/></svg>
<svg style="left:47px;top:116px" width="12" height="10" viewBox="0 0 12 10"><path d="M0 0H4.5L5.5 1.5H12V10H0Z" fill="#C2AC6E"/></svg>
<span class="tr" style="left:67px;top:113px">css</span>
<!-- images -->
<svg style="left:31px;top:142px" width="5" height="8" viewBox="0 0 5 8"><path d="M0.5 0.5L4.3 4L0.5 7.5" stroke="#999" fill="none" stroke-width="1.2"/></svg>
<svg style="left:47px;top:141px" width="12" height="10" viewBox="0 0 12 10"><path d="M0 0H4.5L5.5 1.5H12V10H0Z" fill="#C2AC6E"/></svg>
<span class="tr" style="left:67px;top:138px">images</span>
<!-- js -->
<svg style="left:31px;top:167px" width="5" height="8" viewBox="0 0 5 8"><path d="M0.5 0.5L4.3 4L0.5 7.5" stroke="#999" fill="none" stroke-width="1.2"/></svg>
<svg style="left:47px;top:166px" width="12" height="10" viewBox="0 0 12 10"><path d="M0 0H4.5L5.5 1.5H12V10H0Z" fill="#C2AC6E"/></svg>
<span class="tr" style="left:67px;top:163px;color:#3DA564">js</span>
<!-- files -->
<span class="tr" style="left:47px;top:188px;color:#B3AA88;font-size:11px;letter-spacing:1px;font-weight:bold">&lt;&gt;</span>
<span class="tr" style="left:67px;top:188px">forms01.html</span>
<span class="tr" style="left:47px;top:213px;color:#B3AA88;font-size:11px;letter-spacing:1px;font-weight:bold">&lt;&gt;</span>
<span class="tr" style="left:67px;top:213px">success.html</span>
<!-- root 2 -->
<svg style="left:9px;top:243px" width="9" height="6" viewBox="0 0 9 6"><path d="M0.5 0.5L4.5 5L8.5 0.5" stroke="#333" fill="none" stroke-width="1.3"/></svg>
<svg style="left:26px;top:241px" width="13" height="11" viewBox="0 0 13 11"><path d="M0 0H5L6 1.5H12V11H0Z" fill="#C2AC6E"/><path d="M3.5 5H9.5M3.5 7.5H9.5" stroke="#EFE3B8" stroke-width="1.1"/></svg>
<span class="tr" style="left:46px;top:238px;color:#444;font-size:11.7px">任务6 使用正则表达式验证注册页面信息</span>
<!-- css -->
<svg style="left:31px;top:267px" width="5" height="8" viewBox="0 0 5 8"><path d="M0.5 0.5L4.3 4L0.5 7.5" stroke="#999" fill="none" stroke-width="1.2"/></svg>
<svg style="left:47px;top:266px" width="12" height="10" viewBox="0 0 12 10"><path d="M0 0H4.5L5.5 1.5H12V10H0Z" fill="#C2AC6E"/></svg>
<span class="tr" style="left:67px;top:263px">css</span>
<!-- images -->
<svg style="left:31px;top:292px" width="5" height="8" viewBox="0 0 5 8"><path d="M0.5 0.5L4.3 4L0.5 7.5" stroke="#999" fill="none" stroke-width="1.2"/></svg>
<svg style="left:47px;top:291px" width="12" height="10" viewBox="0 0 12 10"><path d="M0 0H4.5L5.5 1.5H12V10H0Z" fill="#C2AC6E"/></svg>
<span class="tr" style="left:67px;top:288px">images</span>
<!-- js open -->
<svg style="left:30px;top:318px" width="8" height="6" viewBox="0 0 8 6"><path d="M0.6 0.6L4 5L7.4 0.6" stroke="#333" fill="none" stroke-width="1.5"/></svg>
<svg style="left:46px;top:315px" width="14" height="12" viewBox="0 0 14 12"><path d="M0.5 11V0.5H4.5L5.5 1.5H12.5V4" stroke="#CFC3A0" fill="none" stroke-width="1"/><path d="M0.3 4H13.5L12.8 12H0.3Z" fill="#BCAB66"/></svg>
<span class="tr" style="left:67px;top:313px">js</span>
<span class="tr" style="left:47px;top:338px;color:#B3AA88;font-size:11px;letter-spacing:1px;font-weight:bold">&lt;&gt;</span>
<span class="tr" style="left:67px;top:338px">register-string.html</span>
<span class="tr" style="left:47px;top:363px;color:#B3AA88;font-size:11px;letter-spacing:1px;font-weight:bold">&lt;&gt;</span>
<span class="tr" style="left:67px;top:363px">success.html</span>

<!-- recorder floating toolbar -->
<div class="abs" style="left:707px;top:0px;width:504px;height:65px;border-radius:0 0 7px 7px;box-shadow:1px 2px 3px rgba(0,0,0,0.25)"></div>
<div class="abs" style="left:706px;top:0px;width:504px;height:64px;border:1px solid #A9A9A9;border-left-width:2px;border-radius:0 0 7px 7px;background:linear-gradient(180deg,#FAFAFA 0px,#F4F4F4 28px,#E8E8E8 30px,#EEEEEE 44px,#F6F6F6 64px)"></div>
<div class="abs" style="left:1178px;top:0;width:1px;height:63px;background:#C9C9C9"></div>
<div class="abs" style="left:1179px;top:31px;width:31px;height:1px;background:#CFCFCF"></div>
<!-- separators -->
<div class="abs" style="left:778px;top:17px;width:1px;height:38px;background:#555"></div>
<div class="abs" style="left:990px;top:17px;width:1px;height:38px;background:#555"></div>
<div class="abs" style="left:1114px;top:17px;width:1px;height:38px;background:#555"></div>
<!-- icon1: window + green arrow -->
<svg style="left:727px;top:19px" width="42" height="36" viewBox="0 0 42 36"><rect x="0.8" y="0.8" width="38.4" height="27.4" fill="#FDFDFD" stroke="#9C9C9C" stroke-width="1.6"/><rect x="1" y="1" width="38" height="4.5" fill="#A8A8A8"/><path d="M9.2 25.4L22.4 17.2L22.5 21.5C27 22.5 33 22 33.5 17C34 14 31.5 11.5 29 9.8C34 9 39 13 39 20C39 27 33 30.5 23 30.5L22.7 33.5Z" fill="#84DA3C" stroke="#4E9A22" stroke-width="0.9" stroke-linejoin="round"/><path d="M31 11.5C35 13.5 37 17 36 22" stroke="#C8F59A" stroke-width="1.4" fill="none"/></svg>
<!-- icon2: camera lens -->
<svg style="left:790px;top:15px" width="39" height="39" viewBox="0 0 39 39"><defs><linearGradient id="lg1" x1="0" y1="0" x2="0" y2="1"><stop offset="0" stop-color="#9A9A9A"/><stop offset="0.5" stop-color="#F4F4F4"/><stop offset="1" stop-color="#A8A8A8"/></linearGradient></defs><circle cx="19.5" cy="19.5" r="19" fill="url(#lg1)"/><circle cx="19.5" cy="19.5" r="16.6" fill="#E6E6E6"/><circle cx="19.5" cy="19.5" r="15" fill="#151515"/><circle cx="19.5" cy="19.5" r="12" fill="none" stroke="#2E2E2E" stroke-width="1.2"/><circle cx="19.5" cy="19.5" r="8.5" fill="none" stroke="#333" stroke-width="1.2"/><circle cx="19.5" cy="19.5" r="5" fill="none" stroke="#3A3A3A" stroke-width="1"/><circle cx="19.5" cy="19.5" r="2" fill="#484848"/></svg>
<!-- icon3: pencil -->
<svg style="left:840px;top:14px" width="40" height="40" viewBox="0 0 40 40"><g transform="rotate(45 20 20)"><rect x="14.5" y="-3" width="11" height="4" rx="2" fill="#D84040"/><rect x="14.5" y="0.5" width="11" height="5" fill="#C8C8C8"/><rect x="14.5" y="5.5" width="11" height="25" fill="#2F58C8"/><rect x="14.5" y="5.5" width="3.5" height="25" fill="#5A82E8"/><rect x="21.5" y="5.5" width="4" height="25" fill="#1E3E9E"/><path d="M14.5 30.5H25.5L20 42Z" fill="#E8C58A"/><path d="M18.2 38.2L20 42L21.8 38.2Z" fill="#333"/></g></svg>
<!-- icon4: user + monitor -->
<svg style="left:890px;top:16px" width="40" height="36" viewBox="0 0 40 36"><circle cx="13" cy="10" r="8" fill="#E2B48C"/><path d="M5 9C5 3 9 1 13 1C17.5 1 21 3.5 21 8.5C19 6.5 15 5.5 13 6C10.5 6.5 7 8 5 9Z" fill="#8A5A30"/><path d="M0 33C0 24 5 19 13 19C19 19 23 22 24 26V33Z" fill="#3D8FD8"/><rect x="18" y="17" width="20" height="14" fill="#F4F4F4" stroke="#C8C8C8" stroke-width="1"/><rect x="19.5" y="18.5" width="17" height="10" fill="#3E9BE0"/><rect x="24" y="31" width="8" height="3" fill="#C8C8C8"/></svg>
<!-- icon5: record -->
<svg style="left:939px;top:15px" width="38" height="38" viewBox="0 0 38 38"><circle cx="19" cy="19" r="18.2" fill="#C42A2A"/><circle cx="19" cy="19" r="15.6" fill="#FBFBFB"/><circle cx="19" cy="19" r="8.8" fill="#E22424"/><path d="M10.2 19A8.8 8.8 0 0 1 27.8 19Z" fill="#F05050"/></svg>
<!-- icon6: monitor fullscreen -->
<svg style="left:1002px;top:17px" width="38" height="37" viewBox="0 0 38 37"><rect x="0.5" y="0.5" width="37" height="29" rx="1" fill="#F4F4F4" stroke="#C6C6C6" stroke-width="1"/><rect x="2" y="2" width="34" height="22" fill="#3A8FD8"/><path d="M3 3L10 8M35 3L28 8M3 23L10 18M35 23L28 18" stroke="#E89A48" stroke-width="3.2"/><rect x="11" y="30" width="16" height="3" fill="#D6D6D6"/><rect x="8" y="33" width="22" height="3" rx="1" fill="#BDBDBD"/></svg>
<!-- icon7: monitor diagonal -->
<svg style="left:1052px;top:18px" width="38" height="36" viewBox="0 0 38 36"><rect x="0.5" y="0.5" width="36" height="29" rx="1" fill="#F4F4F4" stroke="#CFCFCF" stroke-width="1"/><rect x="2" y="2" width="33" height="22" fill="#DDE3E8"/><path d="M7 2H35V24H23Z" fill="#2E86D0"/><rect x="10" y="30" width="17" height="3" fill="#D0D0D0"/><rect x="8" y="33" width="21" height="3" rx="1" fill="#C4C4C4"/></svg>
<svg style="left:1093px;top:32px" width="10" height="6" viewBox="0 0 10 6"><path d="M0 0H10L5 6Z" fill="#7575C8"/></svg>
<!-- icon8: close -->
<svg style="left:1125px;top:15px" width="39" height="39" viewBox="0 0 39 39"><circle cx="19.5" cy="19.5" r="18.5" fill="#B82424"/><circle cx="19.5" cy="19.5" r="17" fill="#FDF2F2"/><circle cx="19.5" cy="19.5" r="15" fill="#E02828"/><path d="M4.5 19.5A15 15 0 0 1 34.5 19.5Z" fill="#EE5A5A"/><path d="M12.5 12.5L26.5 26.5M26.5 12.5L12.5 26.5" stroke="#fff" stroke-width="4.2" stroke-linecap="round"/></svg>
<!-- chevrons -->
<svg style="left:1184px;top:7px" width="20" height="19" viewBox="0 0 20 19"><path d="M2 9L10 2L18 9M2 17L10 10L18 17" stroke="#2A7AC8" stroke-width="3.6" fill="none" stroke-linejoin="miter"/></svg>
<!-- pin -->
<svg style="left:1181px;top:37px" width="25" height="20" viewBox="0 0 25 20"><path d="M0.5 19.5L11 11" stroke="#7A8A9A" stroke-width="1"/><g transform="rotate(-40 15 9)"><rect x="9" y="7" width="11" height="5" rx="1" fill="#3A8AD0"/><rect x="19" y="3" width="4" height="13" rx="1.5" fill="#2E7CC6"/><rect x="6" y="8.5" width="4" height="2" fill="#3A8AD0"/></g></svg>

</body></html>
